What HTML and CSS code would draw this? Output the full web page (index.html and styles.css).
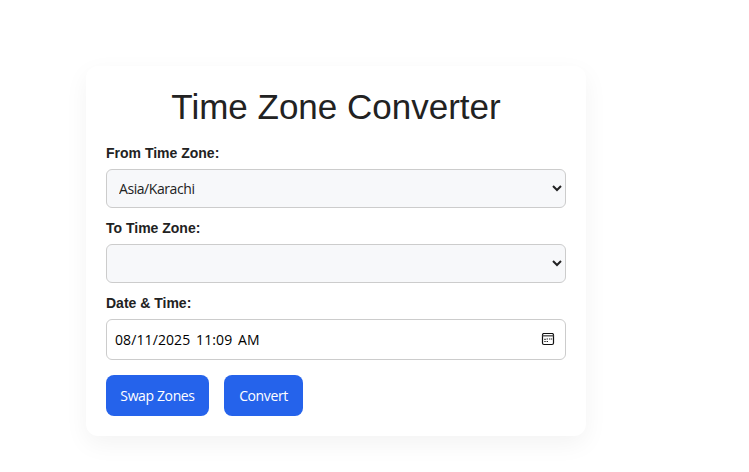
FILE: index.html
```html
<!DOCTYPE html>
<html lang="en">
<head>
    <meta charset="UTF-8">
    <meta name="viewport" content="width=device-width, initial-scale=1.0">
    <link rel="stylesheet" href="styles.css">
    <title>Time Zone Converter</title>
</head>
<body>
    <div class="container">
        <h1>Time Zone Converter</h1>

        <label for="fromZone">From Time Zone:</label>
        <select id="fromZone">
            <option>Asia/Karachi</option>
        </select>

        <label for="toZone">To Time Zone:</label>
        <select id="toZone">
            <option></option>
        </select>

        <label for="dateTime">Date &amp; Time:</label>
        <div class="date-field">
            <input type="text" id="dateTime" value="08/11/2025 11:09 AM">
            <svg class="calendar" width="14" height="14" viewBox="0 0 14 14">
                <rect x="1.5" y="0.5" width="11" height="11" rx="1.5" fill="none" stroke="#111" stroke-width="1.2"/>
                <path d="M1.5 2.8h11" stroke="#555" stroke-width="1.4"/>
                <path d="M5.6 6h1.4M8 6h1.4M10 6h1.2M3.3 8.5h1.4M5.6 8.5h1.4M3.3 6.3h1.4" stroke="#222" stroke-width="1.2"/>
            </svg>
        </div>

        <div class="buttons">
            <button class="swap">Swap Zones</button>
            <button class="convert">Convert</button>
        </div>
    </div>
</body>
</html>
```

FILE: styles.css
```css
body {
    font-family: "Liberation Sans", Arial, sans-serif;
    min-height: 100vh;
    margin: 0;
    padding: 66px 0 0 86px;
    box-sizing: border-box;
    background-color: #fff;
    color: #222;
}

.container {
    width: 500px;
    height: 370px;
    padding: 20px;
    box-sizing: border-box;
    background-color: #fff;
    border-radius: 12px;
    box-shadow: 0 8px 24px rgba(0, 0, 0, 0.05);
}

h1 {
    margin: 0 0 18px;
    font-size: 35px;
    font-weight: 400;
    line-height: 42px;
    text-align: center;
}

label {
    display: block;
    margin-bottom: 8px;
    font-size: 14px;
    font-weight: 700;
    line-height: 15px;
}

select, .date-field {
    display: block;
    width: 100%;
    height: 39px;
    margin-bottom: 13px;
    box-sizing: border-box;
    border: 1px solid #ccc;
    border-radius: 6px;
}

select {
    padding: 0 0 0 8px;
    background-color: #f7f8fa;
    color: #222;
    font: 14px "Open Sans", "Noto Sans", sans-serif;
    letter-spacing: -0.43px;
}

.date-field {
    display: flex;
    align-items: center;
    height: 41px;
    margin-bottom: 15px;
    padding: 0 10px 0 8px;
}

.date-field input {
    flex: 1;
    padding: 0;
    border: none;
    outline: none;
    background: none;
    color: #000;
    font: 14px "Open Sans", "Noto Sans", sans-serif;
    letter-spacing: 0.1px;
    word-spacing: 2px;
}

.buttons {
    display: flex;
    gap: 15px;
}

button {
    height: 41px;
    padding: 0;
    border: none;
    border-radius: 8px;
    background-color: #2563eb;
    color: #fff;
    font: 14px "Open Sans", "Noto Sans", sans-serif;
    letter-spacing: -0.38px;
    cursor: pointer;
}

.swap {
    width: 103px;
}

.convert {
    width: 79px;
}
```
